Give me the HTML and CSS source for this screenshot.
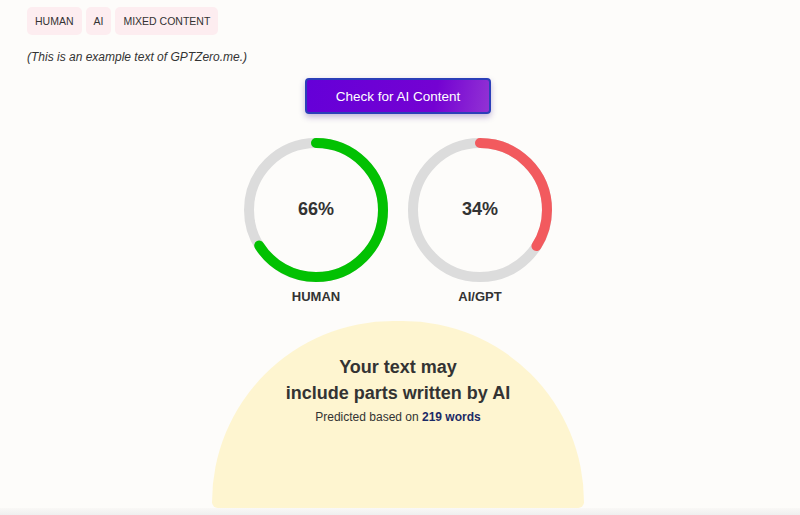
FILE: index.html
```html
<!DOCTYPE html>
<html>
<head>
	<meta charset="utf-8">
	<title>GPTZero</title>
	<link rel="stylesheet" href="styles.css">
</head>
<body>
	<div class="page">
		<div class="tags">
			<span class="tag">HUMAN</span>
			<span class="tag">AI</span>
			<span class="tag">MIXED CONTENT</span>
		</div>
		<p class="note">(This is an example text of GPTZero.me.)</p>

		<div class="center">
			<button class="check">Check for AI Content</button>

			<div class="scores">
				<div class="score">
					<div class="ring">
						<svg width="146" height="146" viewBox="0 0 146 146">
							<circle cx="73" cy="73" r="67" fill="none" stroke="#dcdcdc" stroke-width="10"/>
							<circle cx="73" cy="73" r="67" fill="none" stroke="#02c102" stroke-width="10" stroke-linecap="round" stroke-dasharray="277.8 421" transform="rotate(-90 73 73)"/>
						</svg>
						<span class="pct">66%</span>
					</div>
					<div class="label">HUMAN</div>
				</div>
				<div class="score">
					<div class="ring">
						<svg width="146" height="146" viewBox="0 0 146 146">
							<circle cx="73" cy="73" r="67" fill="none" stroke="#dcdcdc" stroke-width="10"/>
							<circle cx="73" cy="73" r="67" fill="none" stroke="#f25a5e" stroke-width="10" stroke-linecap="round" stroke-dasharray="143.1 421" transform="rotate(-90 73 73)"/>
						</svg>
						<span class="pct">34%</span>
					</div>
					<div class="label">AI/GPT</div>
				</div>
			</div>

			<div class="result">
				<h2>Your text may<br>include parts written by AI</h2>
				<p>Predicted based on <b>219 words</b></p>
			</div>
		</div>
	</div>
	<div class="fade"></div>
</body>
</html>
```

FILE: styles.css
```css
* {padding: 0; margin: 0; box-sizing: border-box;}
html, body {height: 100%;}
body {background: #fdfcfa; color: #333; font-family: "Liberation Sans", Arial, sans-serif; overflow: hidden; display: flex; flex-direction: column;}
.page {flex: 1; padding: 7px 4px 0 27px;}
.tags {display: flex; gap: 4px;}
.tag {display: block; height: 28px; line-height: 28px; padding: 0 8px; background: #fdedf0; border-radius: 5px; font-size: 10.5px; color: #333;}
.note {margin-top: 15px; font-size: 12px; font-style: italic; color: #333;}

.center {display: flex; flex-direction: column; align-items: center; margin-left: -27px; margin-top: 14px;}
.check {width: 186px; height: 36px; border: 2px solid #2b3fb8; border-radius: 4px; background: linear-gradient(100deg, #6500d8 0%, #7402d2 70%, #9232d4 100%); color: #fff; font-family: "Liberation Sans", Arial, sans-serif; font-size: 13.5px; box-shadow: 0 3px 6px rgba(60, 20, 140, 0.3);}

.scores {display: flex; gap: 18px; margin-top: 23px;}
.score {display: flex; flex-direction: column; align-items: center;}
.ring {position: relative; width: 146px; height: 146px;}
.ring svg {display: block;}
.pct {position: absolute; left: 0; right: 0; top: 62px; text-align: center; font-size: 18px; font-weight: bold; color: #333;}
.label {margin-top: 6px; font-size: 13px; font-weight: bold; color: #333;}

.result {width: 372px; height: 187px; margin-top: 17px; background: #fef5d0; border-radius: 186px 186px 6px 6px; text-align: center; padding-top: 33px;}
.result h2 {font-size: 18px; line-height: 26px; font-weight: bold; color: #333;}
.result p {font-size: 12px; margin-top: 4px; color: #333;}
.result b {color: #1b2a66;}

.fade {height: 8px; background: linear-gradient(#f9f8f6, #efefef);}
```
